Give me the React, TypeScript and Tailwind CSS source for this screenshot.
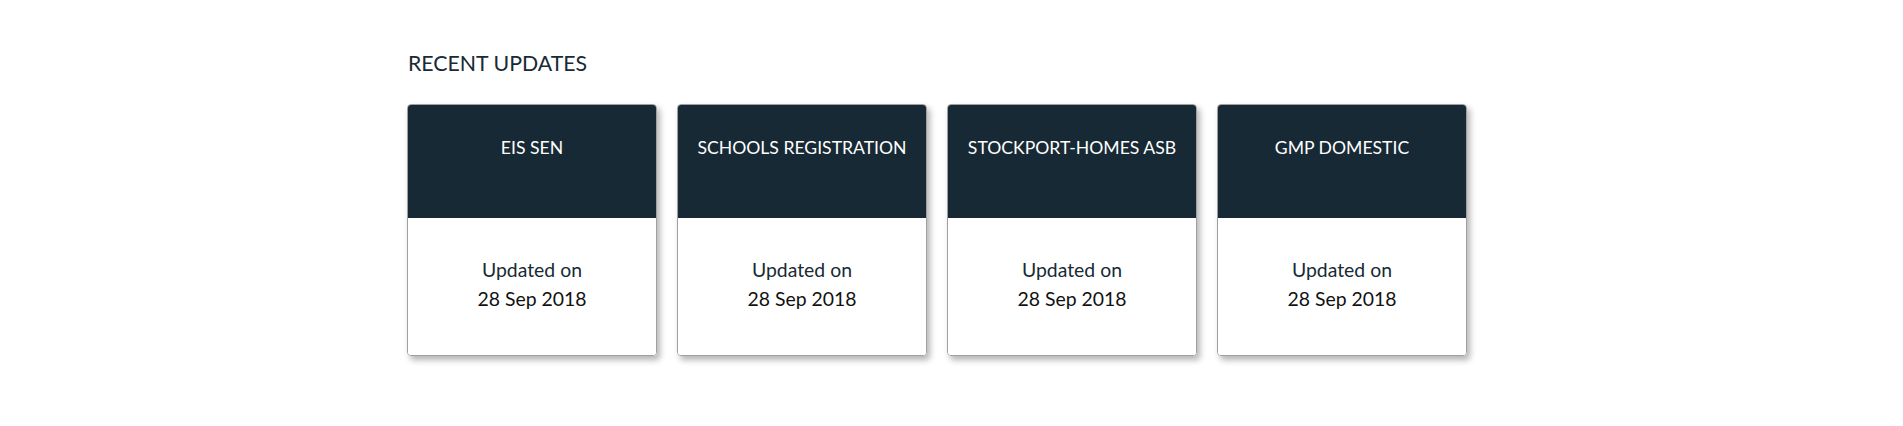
const updates = [
  { title: "EIS SEN", date: "28 Sep 2018" },
  { title: "SCHOOLS REGISTRATION", date: "28 Sep 2018" },
  { title: "STOCKPORT-HOMES ASB", date: "28 Sep 2018" },
  { title: "GMP DOMESTIC", date: "28 Sep 2018" },
];

export default function App() {
  return (
    <div className="w-full h-[426px] bg-white font-['Lato',sans-serif] text-[#172a35]">
      <div className="pl-[407px] pt-[48px]">
        <h2 className="text-[21.3px] leading-[30px] mb-[26px] pl-px">RECENT UPDATES</h2>
        <div className="flex gap-[20px]">
          {updates.map((u) => (
            <div
              key={u.title}
              className="w-[250px] h-[252px] flex flex-col rounded-[4px] border border-[#a0a0a0] overflow-hidden shadow-[3px_4px_6px_rgba(0,0,0,0.3)]"
            >
              <div className="h-[113px] bg-[#172935] text-white text-center text-[17.6px] leading-[29px] pt-[28px]">
                {u.title}
              </div>
              <div className="flex-1 bg-white flex flex-col items-center justify-center text-[19.4px] leading-[29px] pb-[6px]">
                <span>Updated on</span>
                <span className="text-[#111]">{u.date}</span>
              </div>
            </div>
          ))}
        </div>
      </div>
    </div>
  );
}
